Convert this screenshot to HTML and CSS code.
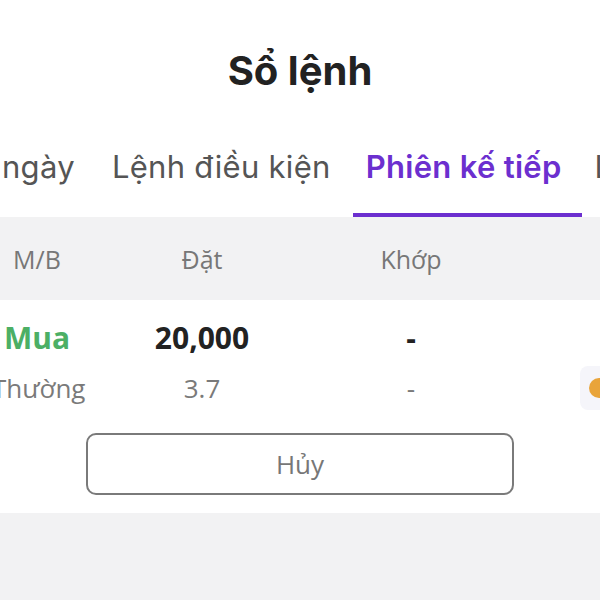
FILE: index.html
```html
<!DOCTYPE html>
<html lang="vi">
<head>
  <meta charset="UTF-8">
  <meta name="viewport" content="width=device-width, initial-scale=1.0">
  <title>Sổ lệnh</title>
  <link rel="stylesheet" href="styles.css">
</head>
<body>
  <div class="screen">
    <h1 class="title">Sổ lệnh</h1>

    <nav class="tabs">
      <span class="tab first">ngày</span>
      <span class="tab">Lệnh điều kiện</span>
      <span class="tab active">Phiên kế tiếp</span>
      <span class="tab after">Lệnh</span>
    </nav>

    <div class="order-head">
      <span>M/B</span>
      <span>Đặt</span>
      <span>Khớp</span>
      <span></span>
    </div>

    <div class="order">
      <div class="order-grid">
        <span class="side buy">Mua</span>
        <span class="qty">20,000</span>
        <span class="qty">-</span>
        <span></span>
        <span class="sub type">Thường</span>
        <span class="sub">3.7</span>
        <span class="sub">-</span>
        <span class="status"><i class="dot"></i></span>
      </div>
      <div class="actions">
        <button class="cancel-btn">Hủy</button>
      </div>
    </div>

    <div class="order next"></div>
  </div>
</body>
</html>
```

FILE: styles.css
```css
body {
  margin: 0;
  background: #fff;
  font-family: "Open Sans", "Noto Sans", sans-serif;
  color: #222;
}
.screen {
  width: 600px;
  height: 600px;
  overflow: hidden;
}
.title {
  margin: 0;
  height: 140px;
  display: flex;
  align-items: center;
  justify-content: center;
  font-family: Inter, "Noto Sans", sans-serif;
  font-size: 40px;
  font-weight: 700;
  color: #222;
}
.tabs {
  display: flex;
  white-space: nowrap;
  font-family: Inter, "Noto Sans", sans-serif;
  font-size: 31px;
  letter-spacing: 0.3px;
  color: #555;
}
.tab {
  padding: 7px 18.5px 26px;
  line-height: 40px;
  border-bottom: 4px solid transparent;
}
.tab.first {
  padding-left: 0;
  margin-left: 2px;
}
.tab.active {
  margin-left: 3.5px;
  padding-left: 13px;
  padding-right: 20px;
  color: #6c2fcf;
  font-weight: 600;
  border-bottom-color: #6c2fcf;
}
.tab.after {
  padding-left: 13px;
}
.order-head,
.order-grid {
  display: grid;
  grid-template-columns: 74px 256px 162px 1fr;
  text-align: center;
}
.order-head {
  height: 83px;
  align-items: center;
  background: #f2f2f3;
  font-size: 25px;
  color: #777;
}
.order {
  padding: 16px 0 18px;
}
.order-grid {
  row-gap: 6px;
  line-height: 44px;
}
.side {
  font-size: 30px;
  font-weight: 700;
}
.buy {
  color: #4caf65;
}
.qty {
  font-size: 30px;
  font-weight: 700;
  color: #222;
}
.sub {
  font-size: 26px;
  color: #7a7a7a;
}
.type {
  margin-left: -8px;
}
.status {
  justify-self: end;
  width: 44px;
  height: 44px;
  margin-right: -24px;
  display: flex;
  align-items: center;
  padding-left: 9px;
  box-sizing: border-box;
  background: #f5f5fa;
  border-radius: 8px;
}
.dot {
  width: 20px;
  height: 20px;
  border-radius: 50%;
  background: #e9a43a;
}
.actions {
  display: flex;
  justify-content: center;
  margin-top: 23px;
}
.cancel-btn {
  width: 428px;
  height: 62px;
  border: 2px solid #7a7a7a;
  border-radius: 10px;
  background: #fff;
  font-family: "Open Sans", "Noto Sans", sans-serif;
  font-size: 26px;
  color: #777;
}
.order.next {
  height: 100px;
  padding: 0;
  background: #f2f2f3;
}
```
